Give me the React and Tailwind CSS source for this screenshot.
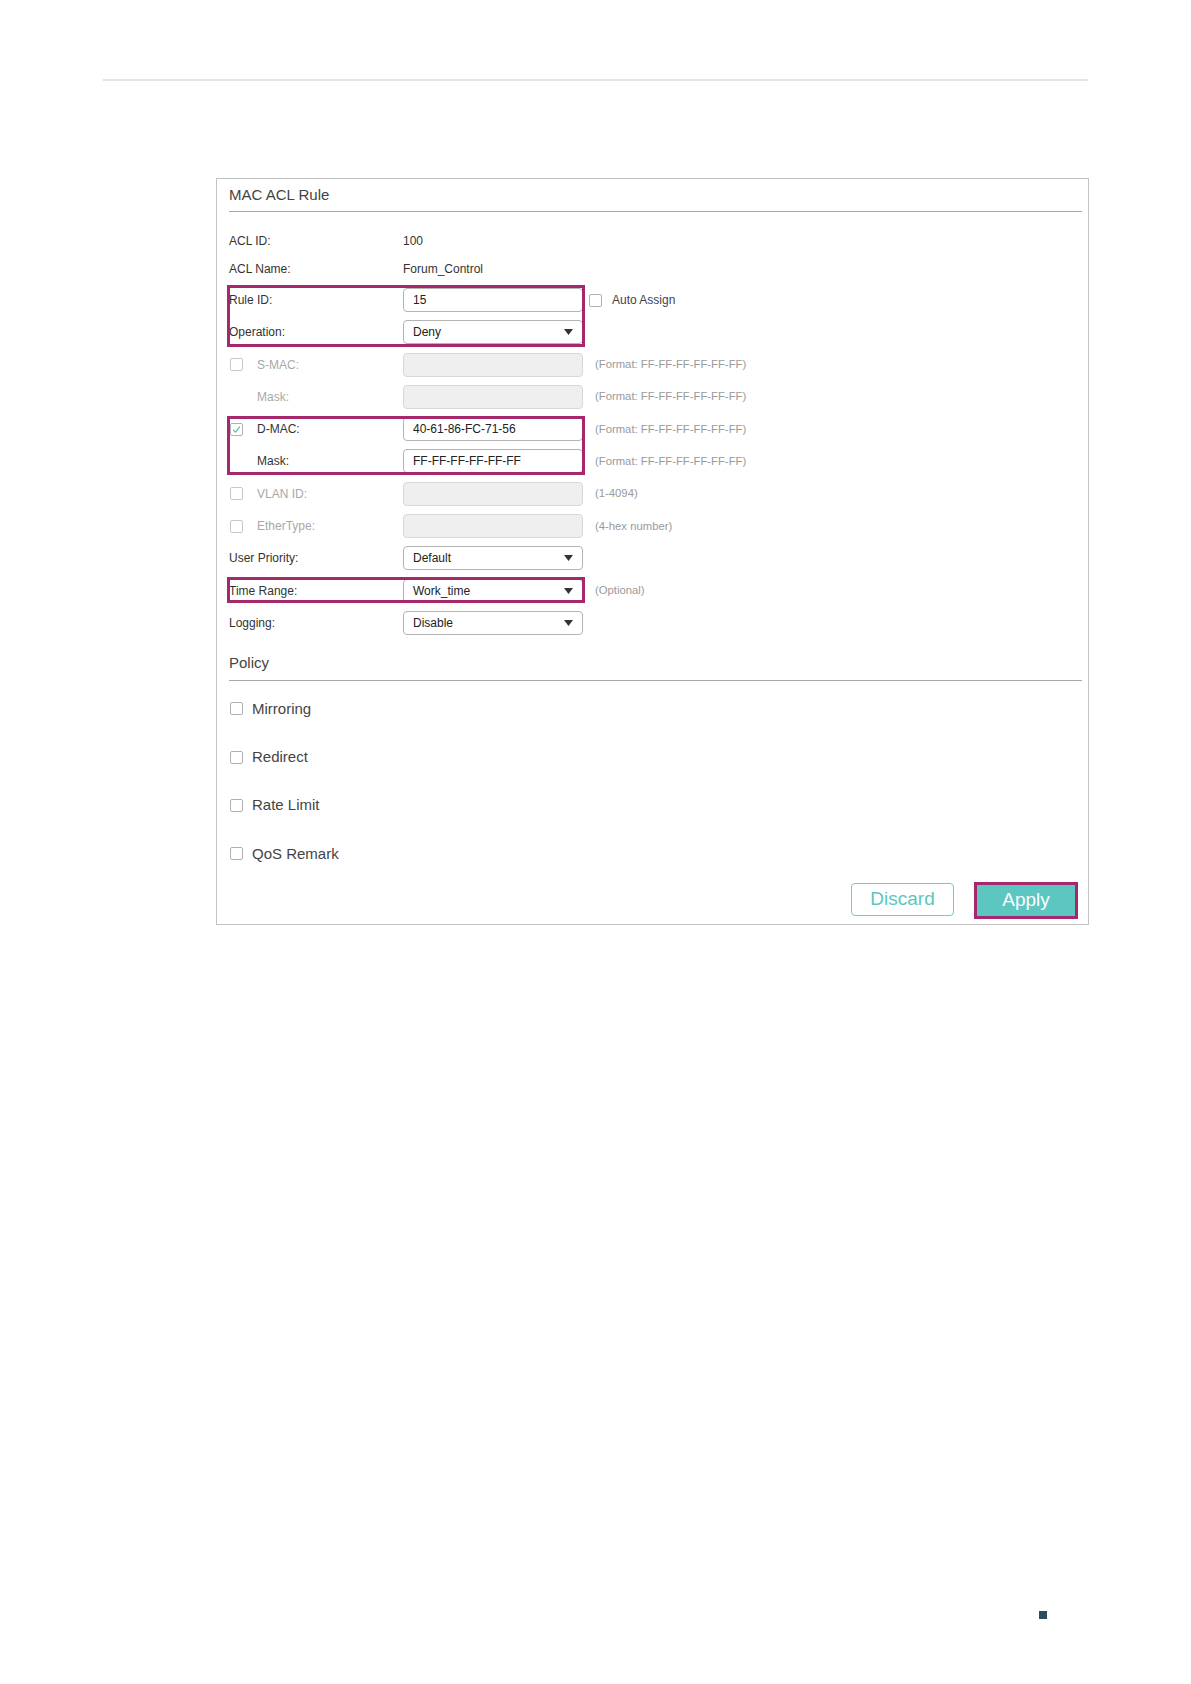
import React from 'react';

const RED = 'border-[#a6286c]';

const Checkbox = ({ checked = false, disabled = false }) => (
    <span
        className={`flex h-[13px] w-[13px] shrink-0 items-center justify-center rounded-[2px] border bg-white ${
            disabled ? 'border-[#c8c8c8]' : 'border-[#b0b0b0]'
        }`}
    >
        {checked && (
            <svg width="9" height="9" viewBox="0 0 9 9" fill="none">
                <path d="M1.2 4.8 L3.5 7.1 L7.9 1.6" stroke="#4fb7a8" strokeWidth="1.1" />
            </svg>
        )}
    </span>
);

const TextBox = ({ value = '', disabled = false }) => (
    <div
        className={`flex h-6 w-[180px] items-center rounded-[4px] border pl-[9px] text-[12px] ${
            disabled ? 'border-[#d8d8d8] bg-[#efefef]' : 'border-[#b3b3b3] bg-white text-[#222]'
        }`}
    >
        {value}
    </div>
);

const SelectBox = ({ value }) => (
    <div className="flex h-6 w-[180px] items-center justify-between rounded-[4px] border border-[#b3b3b3] bg-white pl-[9px] pr-[9px] text-[12px] text-[#222]">
        <span>{value}</span>
        <svg width="9" height="6" viewBox="0 0 9 6">
            <path d="M0 0 H9 L4.5 6 Z" fill="#333" />
        </svg>
    </div>
);

const Hint = ({ children }) => <span className="ml-[12px] text-[11.3px] text-[#9a9a9a]">{children}</span>;

// label column for rows that have a leading checkbox
const CheckLabel = ({ label, checked, disabled }) => (
    <div className="flex w-[174px] items-center">
        <span className="ml-[1px]">
            <Checkbox checked={checked} disabled={disabled} />
        </span>
        <span className={`ml-[14px] ${disabled ? 'text-[#a8a8a8]' : 'text-[#333]'}`}>{label}</span>
    </div>
);

const IndentLabel = ({ label, disabled }) => (
    <div className={`w-[174px] pl-[28px] ${disabled ? 'text-[#a8a8a8]' : 'text-[#333]'}`}>{label}</div>
);

const PlainLabel = ({ label }) => <div className="w-[174px] text-[#333]">{label}</div>;

const Row = ({ children }) => <div className="flex h-6 items-center text-[12px]">{children}</div>;

const Highlight = ({ className = '', children }) => (
    <div className="relative">
        {children}
        <div className={`pointer-events-none absolute -left-[2px] w-[358px] border-[3px] ${RED} ${className}`} />
    </div>
);

const PolicyItem = ({ label }) => (
    <div className="flex h-6 items-center">
        <span className="ml-[1px]">
            <Checkbox />
        </span>
        <span className="ml-[9px] text-[15px] text-[#444]">{label}</span>
    </div>
);

const fmt = '(Format: FF-FF-FF-FF-FF-FF)';

export default function App() {
    return (
        <div
            className="flex h-[1684px] w-[1191px] flex-col bg-white"
            style={{ fontFamily: '"Liberation Sans", Arial, sans-serif' }}
        >
            <div className="ml-[103px] mt-[79px] h-[2px] w-[985px] bg-[#e4e4e4]" />

            <div className="ml-[216px] mt-[97px] w-[873px] border border-[#c2c2c2] pb-[5px]">
                <div className="pl-[12px] pr-[6px]">
                    <div className="border-b border-[#a8a8a8] pb-[7px] pt-[6px] text-[15px] leading-[19px] text-[#444]">
                        MAC ACL Rule
                    </div>

                    <div className="mt-[17px] flex flex-col gap-[4px]">
                        <Row>
                            <PlainLabel label="ACL ID:" />
                            <span className="text-[#333]">100</span>
                        </Row>
                        <Row>
                            <PlainLabel label="ACL Name:" />
                            <span className="text-[#333]">Forum_Control</span>
                        </Row>
                    </div>

                    <div className="mt-[7px] flex flex-col gap-[8.3px]">
                        <Highlight className="-top-[3px] -bottom-[3px]">
                            <div className="flex flex-col gap-[8.3px]">
                                <Row>
                                    <PlainLabel label="Rule ID:" />
                                    <TextBox value="15" />
                                    <span className="ml-[6px]">
                                        <Checkbox />
                                    </span>
                                    <span className="ml-[10px] text-[#444]">Auto Assign</span>
                                </Row>
                                <Row>
                                    <PlainLabel label="Operation:" />
                                    <SelectBox value="Deny" />
                                </Row>
                            </div>
                        </Highlight>

                        <Row>
                            <CheckLabel label="S-MAC:" disabled />
                            <TextBox disabled />
                            <Hint>{fmt}</Hint>
                        </Row>
                        <Row>
                            <IndentLabel label="Mask:" disabled />
                            <TextBox disabled />
                            <Hint>{fmt}</Hint>
                        </Row>

                        <Highlight className="-top-[1px] -bottom-[2px]">
                            <div className="flex flex-col gap-[8.3px]">
                                <Row>
                                    <CheckLabel label="D-MAC:" checked />
                                    <TextBox value="40-61-86-FC-71-56" />
                                    <Hint>{fmt}</Hint>
                                </Row>
                                <Row>
                                    <IndentLabel label="Mask:" />
                                    <TextBox value="FF-FF-FF-FF-FF-FF" />
                                    <Hint>{fmt}</Hint>
                                </Row>
                            </div>
                        </Highlight>

                        <Row>
                            <CheckLabel label="VLAN ID:" disabled />
                            <TextBox disabled />
                            <Hint>(1-4094)</Hint>
                        </Row>
                        <Row>
                            <CheckLabel label="EtherType:" disabled />
                            <TextBox disabled />
                            <Hint>(4-hex number)</Hint>
                        </Row>
                        <Row>
                            <PlainLabel label="User Priority:" />
                            <SelectBox value="Default" />
                        </Row>

                        <Highlight className="-top-[2px] bottom-0">
                            <Row>
                                <PlainLabel label="Time Range:" />
                                <SelectBox value="Work_time" />
                                <Hint>(Optional)</Hint>
                            </Row>
                        </Highlight>

                        <Row>
                            <PlainLabel label="Logging:" />
                            <SelectBox value="Disable" />
                        </Row>
                    </div>

                    <div className="mt-[18px] border-b border-[#a8a8a8] pb-[8px] text-[15px] leading-[19px] text-[#444]">
                        Policy
                    </div>

                    <div className="mt-[16px] flex flex-col gap-[24.3px]">
                        <PolicyItem label="Mirroring" />
                        <PolicyItem label="Redirect" />
                        <PolicyItem label="Rate Limit" />
                        <PolicyItem label="QoS Remark" />
                    </div>
                </div>

                <div className="mt-[16px] flex items-start justify-end pr-[10px]">
                    <button className="mt-[1px] flex h-[33px] w-[103px] items-center justify-center rounded-[4px] border border-[#6dcdc6] bg-white text-[19px] text-[#5ec5be]">
                        Discard
                    </button>
                    <button className={`ml-[20px] flex h-[37px] w-[104px] items-center justify-center border-[3px] ${RED} bg-[#5cc6c0] text-[19px] text-white`}>
                        Apply
                    </button>
                </div>
            </div>

            <div className="mb-[65px] ml-[1039px] mt-auto h-[8px] w-[8px] bg-[#2e4d5c]" />
        </div>
    );
}
